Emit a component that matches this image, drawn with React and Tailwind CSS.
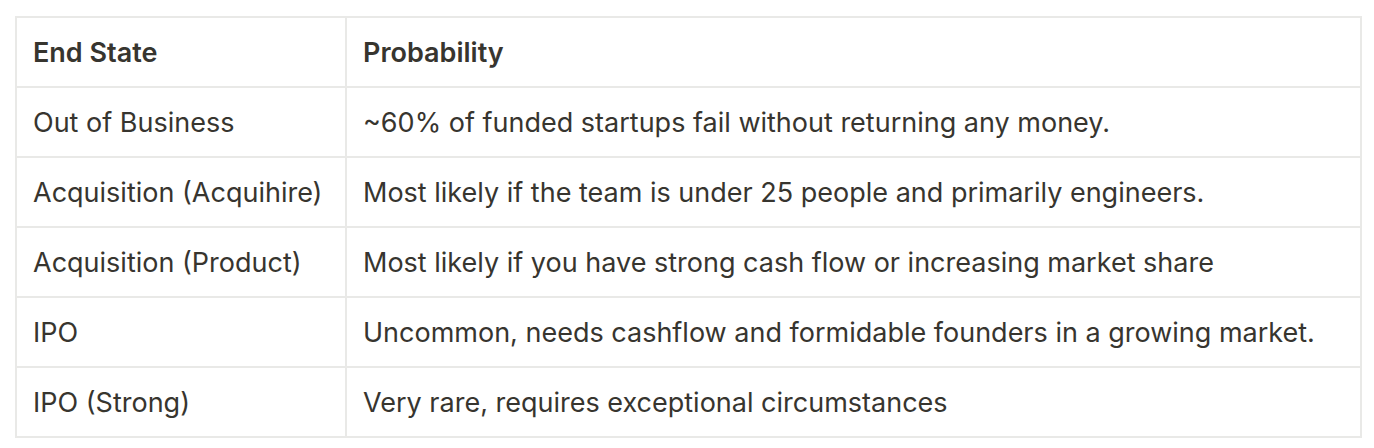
const rows = [
  ['Out of Business', '~60% of funded startups fail without returning any money.'],
  ['Acquisition (Acquihire)', 'Most likely if the team is under 25 people and primarily engineers.'],
  ['Acquisition (Product)', 'Most likely if you have strong cash flow or increasing market share'],
  ['IPO', 'Uncommon, needs cashflow and formidable founders in a growing market.'],
  ['IPO (Strong)', 'Very rare, requires exceptional circumstances'],
]

export default function App() {
  return (
    <div className="min-h-screen bg-white pl-[15px] pt-[16px] font-['Inter',sans-serif] text-[#37352f]">
      <table className="w-[1347px] border-collapse text-[27px] leading-none">
        <thead>
          <tr className="h-[70px]">
            <th className="w-[330px] border-2 border-[#e9e9e7] px-[16px] text-left font-semibold">End State</th>
            <th className="border-2 border-[#e9e9e7] px-[16px] text-left font-semibold">Probability</th>
          </tr>
        </thead>
        <tbody>
          {rows.map(([state, prob]) => (
            <tr key={state} className="h-[70px]">
              <td className="border-2 border-[#e9e9e7] px-[16px]">{state}</td>
              <td className="border-2 border-[#e9e9e7] px-[16px]">{prob}</td>
            </tr>
          ))}
        </tbody>
      </table>
    </div>
  )
}
